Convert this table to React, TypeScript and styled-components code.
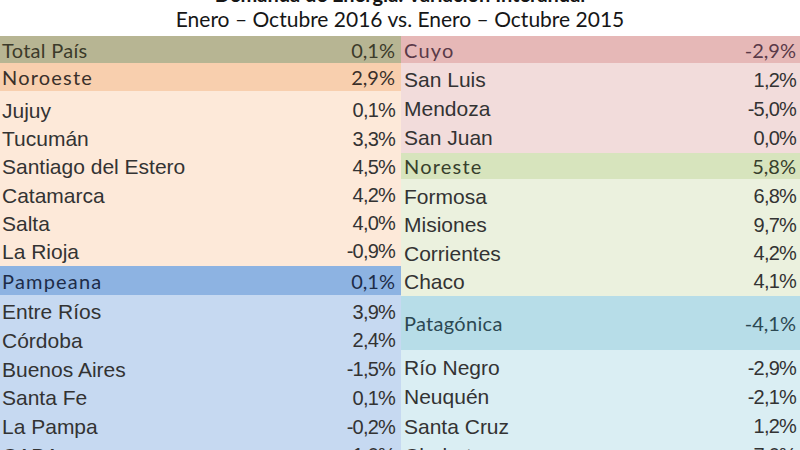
import styled, { createGlobalStyle } from "styled-components";

const GlobalStyle = createGlobalStyle`
    html, body {
        margin: 0;
        padding: 0;
        background: #ffffff;
        overflow: hidden;
    }
    #root {
        width: 800px;
        height: 450px;
        overflow: hidden;
    }
`;

const Page = styled.div`
    width: 800px;
    height: 450px;
    overflow: hidden;
    display: flex;
    flex-direction: column;
`;

const TitleBlock = styled.header`
    margin-top: -17px;
    height: 53px;
    flex-shrink: 0;
    display: flex;
    flex-direction: column;
    align-items: center;
    font-family: Lato, "Open Sans", sans-serif;
    color: #161616;
`;

const TitleMain = styled.div`
    font-weight: bold;
    font-size: 20px;
    line-height: 22px;
`;

const TitleSub = styled.div`
    font-size: 21px;
    line-height: 28px;
`;

const Table = styled.div`
    display: grid;
    grid-template-columns: 401px 399px;
    flex: 1;
    min-height: 0;
`;

const Column = styled.div<{ $side: "left" | "right" }>`
    display: flex;
    flex-direction: column;
    min-height: 0;
    --pl: ${(p) => (p.$side === "left" ? "2px" : "3px")};
    --pr: ${(p) => (p.$side === "left" ? "6px" : "4px")};
`;

const HeaderRow = styled.div<{ $bg: string; $color: string; $h: number; $spaced?: boolean }>`
    flex-shrink: 0;
    height: ${(p) => p.$h}px;
    background: ${(p) => p.$bg};
    color: ${(p) => p.$color};
    display: flex;
    align-items: center;
    justify-content: space-between;
    padding: 0 var(--pr) 0 var(--pl);
    font-family: Lato, "Open Sans", sans-serif;
    font-size: 20px;
    span:first-child {
        letter-spacing: ${(p) => (p.$spaced ? "1.2px" : "0.3px")};
    }
`;

const Body = styled.div<{ $bg: string; $pad: number; $grow?: boolean }>`
    flex-shrink: 0;
    flex-grow: ${(p) => (p.$grow ? 1 : 0)};
    background: ${(p) => p.$bg};
    padding-top: ${(p) => p.$pad}px;
`;

const Row = styled.div<{ $h: number }>`
    height: ${(p) => p.$h}px;
    display: flex;
    align-items: center;
    justify-content: space-between;
    padding: 0 var(--pr) 0 var(--pl);
    color: #333333;
`;

const Name = styled.span`
    font-family: "Liberation Sans", Arial, sans-serif;
    font-size: 21px;
`;

const Value = styled.span`
    font-family: "Liberation Sans", Arial, sans-serif;
    font-size: 20px;
    letter-spacing: -0.8px;
`;

type Section = {
    title: string;
    value: string;
    head: string;
    color: string;
    h: number;
    spaced?: boolean;
    body?: string;
    pad?: number;
    rowH?: number;
    rows: [string, string][];
};

const left: Section[] = [
    { title: "Total País", value: "0,1%", head: "#b7b593", color: "#3c3b2a", h: 27, rows: [] },
    {
        title: "Noroeste", value: "2,9%", head: "#f8cfae", color: "#3a302a", h: 28, spaced: true,
        body: "#fde9d9", pad: 5.9, rowH: 28.2,
        rows: [
            ["Jujuy", "0,1%"],
            ["Tucumán", "3,3%"],
            ["Santiago del Estero", "4,5%"],
            ["Catamarca", "4,2%"],
            ["Salta", "4,0%"],
            ["La Rioja", "-0,9%"],
        ],
    },
    {
        title: "Pampeana", value: "0,1%", head: "#8db3e2", color: "#1d2c48", h: 29, spaced: true,
        body: "#c6d9f1", pad: 2.6, rowH: 28.8,
        rows: [
            ["Entre Ríos", "3,9%"],
            ["Córdoba", "2,4%"],
            ["Buenos Aires", "-1,5%"],
            ["Santa Fe", "0,1%"],
            ["La Pampa", "-0,2%"],
            ["CABA", "1,0%"],
        ],
    },
];

const right: Section[] = [
    {
        title: "Cuyo", value: "-2,9%", head: "#e6b8b7", color: "#5a3a48", h: 27, spaced: true,
        body: "#f2dcdb", pad: 2.5, rowH: 29,
        rows: [
            ["San Luis", "1,2%"],
            ["Mendoza", "-5,0%"],
            ["San Juan", "0,0%"],
        ],
    },
    {
        title: "Noreste", value: "5,8%", head: "#d7e4bd", color: "#37402c", h: 26, spaced: true,
        body: "#ebf1de", pad: 4.3, rowH: 28.3,
        rows: [
            ["Formosa", "6,8%"],
            ["Misiones", "9,7%"],
            ["Corrientes", "4,2%"],
            ["Chaco", "4,1%"],
        ],
    },
    {
        title: "Patagónica", value: "-4,1%", head: "#b7dde8", color: "#2c4852", h: 54,
        body: "#daeef3", pad: 3.4, rowH: 29.3,
        rows: [
            ["Río Negro", "-2,9%"],
            ["Neuquén", "-2,1%"],
            ["Santa Cruz", "1,2%"],
            ["Chubut", "7,0%"],
        ],
    },
];

function RegionColumn({ side, sections }: { side: "left" | "right"; sections: Section[] }) {
    return (
        <Column $side={side}>
            {sections.map((s, i) => (
                <div key={s.title} style={{ display: "contents" }}>
                    <HeaderRow $bg={s.head} $color={s.color} $h={s.h} $spaced={s.spaced}>
                        <span>{s.title}</span>
                        <span>{s.value}</span>
                    </HeaderRow>
                    {s.body && (
                        <Body $bg={s.body} $pad={s.pad ?? 0} $grow={i === sections.length - 1}>
                            {s.rows.map(([name, value]) => (
                                <Row key={name} $h={s.rowH ?? 28}>
                                    <Name>{name}</Name>
                                    <Value>{value}</Value>
                                </Row>
                            ))}
                        </Body>
                    )}
                </div>
            ))}
        </Column>
    );
}

export default function App() {
    return (
        <Page>
            <GlobalStyle />
            <TitleBlock>
                <TitleMain>Demanda de Energía: Variación Interanual</TitleMain>
                <TitleSub>Enero – Octubre 2016 vs. Enero – Octubre 2015</TitleSub>
            </TitleBlock>
            <Table>
                <RegionColumn side="left" sections={left} />
                <RegionColumn side="right" sections={right} />
            </Table>
        </Page>
    );
}
